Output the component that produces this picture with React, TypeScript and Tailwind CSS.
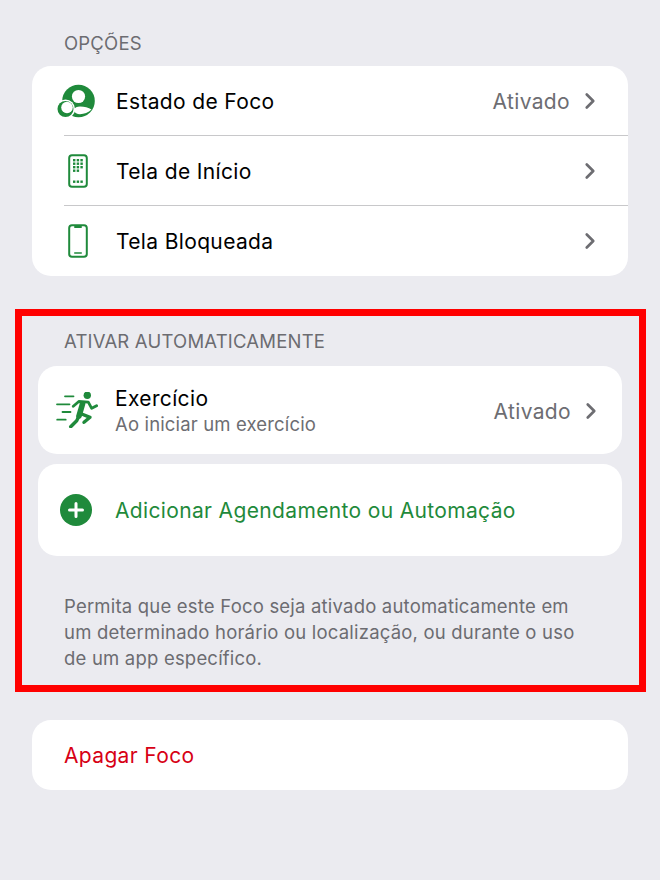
import React from 'react';
import { ChevronRight } from 'lucide-react';

const GREEN = '#1f8a3b';

const FocusIcon = () => (
  <svg width="42" height="34" viewBox="0 0 42 34">
    <circle cx="21.500" cy="17" r="16.300" fill={GREEN} />
    <circle cx="21.500" cy="12.500" r="6.600" fill="#fff" />
    <path d="M16 26c2-2.600 4-3.600 7-3.600 4.500 0 8.500 1 11.500 3.200-3 3.200-7.500 4.600-11.500 4.600-3 0-5-1.200-7-4.200z" fill="#fff" />
    <circle cx="8.500" cy="25" r="9.500" fill="#fff" />
    <circle cx="8.500" cy="25" r="8" fill={GREEN} />
    <circle cx="10" cy="23.500" r="5.800" fill="#fff" />
  </svg>
);

const HomeScreenIcon = () => (
  <svg width="20" height="34" viewBox="0 0 20 34" fill="none">
    <rect x="1.200" y="1.200" width="17.600" height="31.600" rx="2.800" stroke={GREEN} strokeWidth="2" />
    <g fill={GREEN}>
      {[5, 8.500, 12].map(y => [5, 8.700, 12.400].map(x => (
        <rect key={`${x}-${y}`} x={x} y={y} width="2.400" height="2.400" />
      )))}
      <rect x="5" y="15.500" width="2.400" height="2.400" />
      <rect x="8.700" y="15.500" width="2.400" height="2.400" />
      {[5, 8.700, 12.400].map(x => <rect key={x} x={x} y="26.500" width="2.400" height="2.400" />)}
    </g>
  </svg>
);

const LockScreenIcon = () => (
  <svg width="20" height="34" viewBox="0 0 20 34" fill="none">
    <rect x="1.200" y="1.200" width="17.600" height="31.600" rx="2.800" stroke={GREEN} strokeWidth="2" />
    <rect x="6" y="2" width="8" height="2" rx="1" fill={GREEN} />
    <rect x="6" y="28.300" width="8" height="1.400" rx="0.700" fill={GREEN} />
  </svg>
);

const RunnerIcon = () => (
  <svg width="42" height="36" viewBox="0 0 42 36" fill="none">
    <g stroke={GREEN} strokeWidth="1.800" strokeLinecap="round">
      <path d="M9 4.300h8.500" />
      <path d="M1 12.300h12.500" />
      <path d="M6.500 20h8" />
      <path d="M1.200 27.700h8.500" />
    </g>
    <circle cx="31.300" cy="3.300" r="3.700" fill={GREEN} />
    <path d="M17.300 14.300l5.500-4.800 9.500.6 3.400 6.200 4.900-2.600" stroke={GREEN} strokeWidth="2.800" strokeLinecap="round" strokeLinejoin="round" />
    <path d="M26.500 12l-3.500 12" stroke={GREEN} strokeWidth="5.600" strokeLinecap="round" />
    <path d="M22.500 25l-1.800 3.700-6 6" stroke={GREEN} strokeWidth="3.400" strokeLinecap="round" strokeLinejoin="round" />
    <path d="M25.700 22l8.300 3.300-6 5" stroke={GREEN} strokeWidth="3.400" strokeLinecap="round" strokeLinejoin="round" />
  </svg>
);

const PlusIcon = () => (
  <svg width="32" height="32" viewBox="0 0 32 32">
    <circle cx="16" cy="16" r="16" fill={GREEN} />
    <path d="M16 9.500v13M9.500 16h13" stroke="#fff" strokeWidth="3" strokeLinecap="round" />
  </svg>
);

const Chevron = () => (
  <ChevronRight className="w-[26px] h-[26px] text-[#6d6d72]" strokeWidth={2.5} />
);

const options = [
  { icon: <FocusIcon />, label: 'Estado de Foco', value: 'Ativado' },
  { icon: <HomeScreenIcon />, label: 'Tela de Início' },
  { icon: <LockScreenIcon />, label: 'Tela Bloqueada' },
];

const App: React.FC = () => {
  return (
    <div className="w-[660px] h-[880px] overflow-hidden bg-[#ebebf0] font-['Inter',sans-serif] tracking-[0.35px]">
      <div className="pt-[32px] px-[32px]">
        <h2 className="pl-[32px] text-[18.5px] leading-[22px] tracking-[0.2px] text-[#6c6c71]">OPÇÕES</h2>
        <div className="mt-[12px] bg-white rounded-[19px] overflow-hidden">
          {options.map((opt, idx) => (
            <div key={opt.label} className="relative h-[70px] flex items-center pr-[25px]">
              <div className="w-[84px] pl-[8px] flex justify-center shrink-0">{opt.icon}</div>
              <span className="text-[21px] text-black translate-y-[1px]">{opt.label}</span>
              {opt.value && <span className="ml-auto mr-[7px] text-[21px] text-[#6d6d72] translate-y-[1px]">{opt.value}</span>}
              <span className={opt.value ? '' : 'ml-auto'}><Chevron /></span>
              {idx < 2 && <div className="absolute left-[32px] right-0 bottom-0 h-[1px] bg-[#c8c8ca]" />}
            </div>
          ))}
        </div>
      </div>

      <div className="mt-[33px] ml-[15px] w-[631px] h-[383px] border-[7px] border-[#ff0000] pl-[16px] pr-[17px]">
        <h2 className="pl-[26px] pt-[14px] pb-[1px] text-[18.5px] leading-[22px] tracking-[0.2px] text-[#6c6c71]">ATIVAR AUTOMATICAMENTE</h2>
        <div className="mt-[13px] h-[88px] bg-white rounded-[19px] flex items-center pr-[18px]">
          <div className="w-[77px] pl-[18px] shrink-0"><RunnerIcon /></div>
          <div className="flex flex-col translate-y-[1px]">
            <span className="text-[21px] leading-[26px] text-black">Exercício</span>
            <span className="text-[18.5px] leading-[24px] tracking-[0.15px] text-[#6d6d72]">Ao iniciar um exercício</span>
          </div>
          <span className="ml-auto mr-[7px] text-[21px] text-[#6d6d72] translate-y-[2px]">Ativado</span>
          <span className="translate-y-[1px]"><Chevron /></span>
        </div>
        <div className="mt-[10px] h-[92px] bg-white rounded-[19px] flex items-center">
          <div className="w-[77px] pl-[22px] shrink-0"><PlusIcon /></div>
          <span className="text-[21px] text-[#1f8a3b] translate-y-[1px]">Adicionar Agendamento ou Automação</span>
        </div>
        <p className="mt-[37px] ml-[26px] w-[526px] text-[18.5px] leading-[26px] tracking-[0.2px] text-[#6c6c71]">
          Permita que este Foco seja ativado automaticamente em um determinado horário ou localização, ou durante o uso de um app específico.
        </p>
      </div>

      <div className="mt-[28px] mx-[32px] h-[70px] bg-white rounded-[19px] flex items-center pl-[32px]">
        <span className="text-[21px] text-[#d70015] translate-y-[1px]">Apagar Foco</span>
      </div>
    </div>
  );
};

export default App;
